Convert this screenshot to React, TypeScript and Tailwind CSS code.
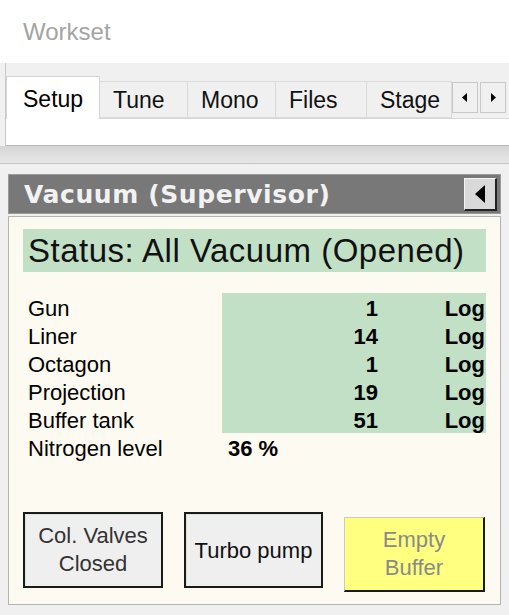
import React from "react";

const sans = { fontFamily: '"Liberation Sans", Arial, sans-serif' };

const tabs: [string, string][] = [
  ["Tune", "w-[88px]"],
  ["Mono", "w-[88px]"],
  ["Files", "w-[91px]"],
  ["Stage", "w-[85px]"],
];

const rows: [string, string][] = [
  ["Gun", "1"],
  ["Liner", "14"],
  ["Octagon", "1"],
  ["Projection", "19"],
  ["Buffer tank", "51"],
];

function Arrow({ dir }: { dir: "left" | "right" }) {
  return (
    <svg width="6" height="9" viewBox="0 0 6 9" aria-hidden>
      {dir === "left" ? <path d="M5 0v9L0 4.5z" fill="#000" /> : <path d="M1 0v9l5-4.5z" fill="#000" />}
    </svg>
  );
}

export default function App() {
  return (
    <div className="w-[509px] h-[615px] overflow-hidden bg-[#f0f0f0] text-black" style={sans}>
      {/* Workset header */}
      <div className="h-[63px] bg-white flex items-center pl-[23px] text-[24px] text-[#a4a4a4]">Workset</div>

      {/* Tab strip */}
      <div className="ml-[5px] border-l border-[#c8c8c8]">
        <div className="h-[55px] flex items-end bg-[#f0f0f0]">
          <div className="h-[43px] w-[94px] -mb-px z-10 bg-white border border-b-0 border-[#d4d4d4] flex items-start pt-[5px] pl-[16px] text-[23px]">
            Setup
          </div>
          {tabs.map(([t, w]) => (
            <div
              key={t}
              className={`${w} h-[37px] pl-[13px] pt-[2px] bg-[#f0f0f0] border border-l-0 border-[#dadada] flex items-center text-[23px] text-[#111]`}
            >
              {t}
            </div>
          ))}
          <div className="self-start mt-[19px] flex gap-[2px]">
            <div className="w-[26px] h-[31px] bg-[#f0f0f0] border border-[#c8c8c8] flex items-center justify-center">
              <Arrow dir="left" />
            </div>
            <div className="w-[26px] h-[31px] bg-[#f0f0f0] border border-[#c8c8c8] flex items-center justify-center">
              <Arrow dir="right" />
            </div>
          </div>
        </div>
        <div className="h-[28px] bg-white border-t border-[#d8d8d8] border-b border-b-[#b8b8b8]" />
      </div>

      {/* Splitter band */}
      <div className="h-[18px] bg-gradient-to-b from-[#d6d6d6] to-[#e6e6e6] border-b border-[#c4c4c4]" />

      {/* Panel */}
      <div className="pt-[10px] px-[8px]">
        <div className="h-[40px] bg-[#787878] flex items-center pl-[15px] pr-[3px] border border-[#9a9a9a]">
          <span
            className="flex-1 pt-[2px] text-[25px] font-bold text-[#f2f2f2] tracking-[0.6px]"
            style={{ fontFamily: '"DejaVu Sans", Verdana, sans-serif' }}
          >
            Vacuum (Supervisor)
          </span>
          <div className="w-[33px] h-[33px] bg-[#d9d9d9] border-t border-l border-t-[#f4f4f4] border-l-[#f4f4f4] border-b-2 border-r-2 border-b-[#222] border-r-[#222] flex items-center justify-center">
            <svg width="10" height="18" viewBox="0 0 10 18" aria-hidden>
              <path d="M10 0v18L0 9z" fill="#000" />
            </svg>
          </div>
        </div>

        <div className="mt-[2px] h-[389px] bg-[#fdfaf1] border border-[#b4b4b4] px-[14px] pt-[12px] flex flex-col">
          <div className="h-[43px] bg-[#c1e0c5] flex items-center pl-[5px] text-[33px] text-[#111] tracking-[0.5px]">
            Status: All Vacuum (Opened)
          </div>

          <div className="mt-[21px] grid grid-cols-[199px_1fr] text-[22px] leading-[22px]">
            <div className="flex flex-col pl-[5px]">
              {rows.map(([l]) => (
                <span key={l} className="h-[28px] pt-[5px]">
                  {l}
                </span>
              ))}
            </div>
            <div className="bg-[#c1e0c5] flex flex-col font-bold">
              {rows.map(([l, v]) => (
                <div key={l} className="h-[28px] pt-[5px] grid grid-cols-[1fr_106px]">
                  <span className="text-right pr-[2px]">{v}</span>
                  <span className="text-right pr-px">Log</span>
                </div>
              ))}
            </div>
            <span className="h-[28px] pt-[5px] pl-[5px]">Nitrogen level</span>
            <span className="h-[28px] pt-[5px] pl-[6px] font-bold">36 %</span>
          </div>

          <div className="mt-auto mb-[12px] flex gap-[21px] items-start">
            <button className="w-[140px] h-[76px] bg-[#efefef] border-2 border-[#1a1a1a] shadow-[inset_1px_1px_0_#d4ead6] flex items-center justify-center text-center text-[22px] leading-[28px] text-[#333]">
              Col. Valves
              <br />
              Closed
            </button>
            <button className="w-[139px] h-[76px] bg-[#efefef] border-2 border-[#1a1a1a] shadow-[inset_1px_1px_0_#d4ead6] flex items-center justify-center text-[22px] text-[#111]">
              Turbo pump
            </button>
            <button className="mt-[5px] w-[141px] h-[75px] bg-[#ffff80] border border-[#c8c8c8] border-b-2 border-r-2 border-b-[#1a1a1a] border-r-[#1a1a1a] flex items-center justify-center text-center text-[22px] leading-[28px] text-[#8a8a8a]">
              Empty
              <br />
              Buffer
            </button>
          </div>
        </div>
      </div>
    </div>
  );
}
